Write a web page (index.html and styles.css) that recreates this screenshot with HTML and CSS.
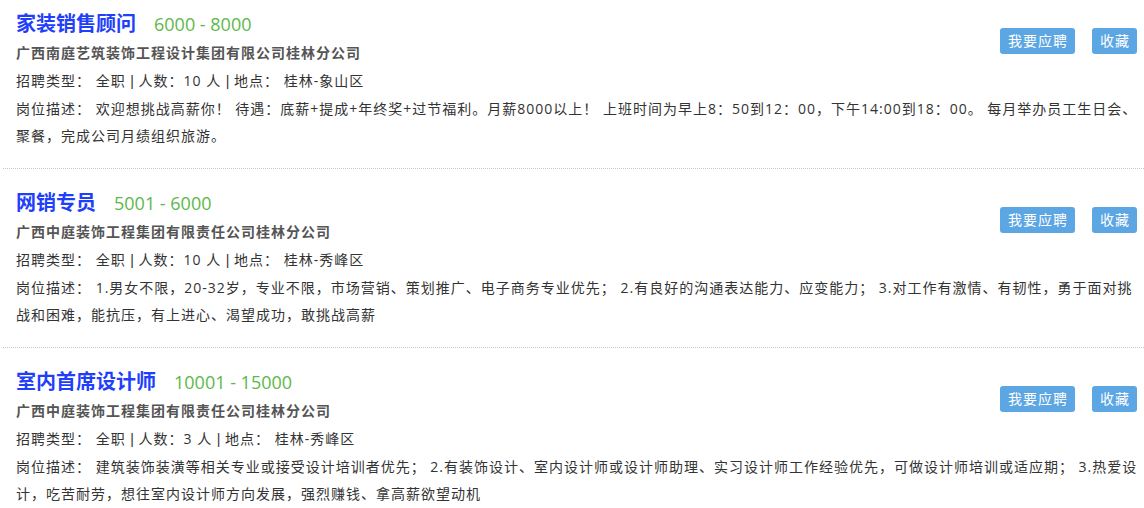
FILE: index.html
```html
<!DOCTYPE html>
<html lang="zh-CN">
<head>
<meta charset="utf-8">
<title>职位列表</title>
<link rel="stylesheet" href="styles.css">
</head>
<body>
<div class="job-list">
  <div class="job">
    <div class="job-head">
      <a class="job-title">家装销售顾问</a>
      <span class="salary">6000 - 8000</span>
    </div>
    <div class="company">广西南庭艺筑装饰工程设计集团有限公司桂林分公司</div>
    <div class="meta">招聘类型： 全职 <span class="sep">|</span> 人数：10 人 <span class="sep">|</span> 地点： 桂林-象山区</div>
    <div class="desc">岗位描述： 欢迎想挑战高薪你！ 待遇：底薪+提成+年终奖+过节福利。月薪8000以上！ 上班时间为早上8：50到12：00，下午14:00到18：00。 每月举办员工生日会、聚餐，完成公司月绩组织旅游。</div>
    <div class="actions">
      <a class="btn btn-apply">我要应聘</a>
      <a class="btn btn-fav">收藏</a>
    </div>
  </div>
  <div class="job">
    <div class="job-head">
      <a class="job-title">网销专员</a>
      <span class="salary">5001 - 6000</span>
    </div>
    <div class="company">广西中庭装饰工程集团有限责任公司桂林分公司</div>
    <div class="meta">招聘类型： 全职 <span class="sep">|</span> 人数：10 人 <span class="sep">|</span> 地点： 桂林-秀峰区</div>
    <div class="desc">岗位描述： 1.男女不限，20-32岁，专业不限，市场营销、策划推广、电子商务专业优先； 2.有良好的沟通表达能力、应变能力； 3.对工作有激情、有韧性，勇于面对挑战和困难，能抗压，有上进心、渴望成功，敢挑战高薪</div>
    <div class="actions">
      <a class="btn btn-apply">我要应聘</a>
      <a class="btn btn-fav">收藏</a>
    </div>
  </div>
  <div class="job">
    <div class="job-head">
      <a class="job-title">室内首席设计师</a>
      <span class="salary">10001 - 15000</span>
    </div>
    <div class="company">广西中庭装饰工程集团有限责任公司桂林分公司</div>
    <div class="meta">招聘类型： 全职 <span class="sep">|</span> 人数：3 人 <span class="sep">|</span> 地点： 桂林-秀峰区</div>
    <div class="desc">岗位描述： 建筑装饰装潢等相关专业或接受设计培训者优先； 2.有装饰设计、室内设计师或设计师助理、实习设计师工作经验优先，可做设计师培训或适应期； 3.热爱设计，吃苦耐劳，想往室内设计师方向发展，强烈赚钱、拿高薪欲望动机</div>
    <div class="actions">
      <a class="btn btn-apply">我要应聘</a>
      <a class="btn btn-fav">收藏</a>
    </div>
  </div>
</div>
</body>
</html>
```
FILE: styles.css
```css
html, body {
  margin: 0;
  padding: 0;
  background: #fff;
}
body {
  font-family: "Open Sans", "Noto Sans CJK SC", sans-serif;
  color: #333;
  font-size: 14px;
  overflow: hidden;
}
.job-list {
  margin-top: -10px;
  padding-left: 3px;
}
.job {
  position: relative;
  padding: 19px 4px 19px 13px;
  border-bottom: 1px dotted #c8c8c8;
}
.job-head {
  display: flex;
  align-items: center;
  height: 30px;
}
.job-title {
  font-size: 20px;
  font-weight: bold;
  color: #1f3ffb;
  line-height: 30px;
}
.salary {
  margin-left: 18px;
  font-size: 18px;
  color: #5cb94a;
  line-height: 30px;
}
.company {
  font-size: 14px;
  letter-spacing: 1px;
  font-weight: bold;
  color: #555;
  line-height: 28px;
}
.meta {
  letter-spacing: 1px;
  line-height: 28px;
}
.sep {
  font-family: "Liberation Sans", sans-serif;
  letter-spacing: 0;
}
.desc {
  letter-spacing: 1px;
  line-height: 27px;
}
.actions {
  position: absolute;
  top: 38px;
  right: 7px;
  display: flex;
  gap: 17px;
}
.btn {
  display: block;
  box-sizing: border-box;
  height: 26px;
  line-height: 26px;
  padding: 0 0 0 1px;
  text-align: center;
  background: #5ca6e4;
  color: #fff;
  border-radius: 3px;
  font-size: 14px;
  letter-spacing: 1px;
}
.btn-apply {
  width: 75px;
}
.btn-fav {
  width: 45px;
}
```
